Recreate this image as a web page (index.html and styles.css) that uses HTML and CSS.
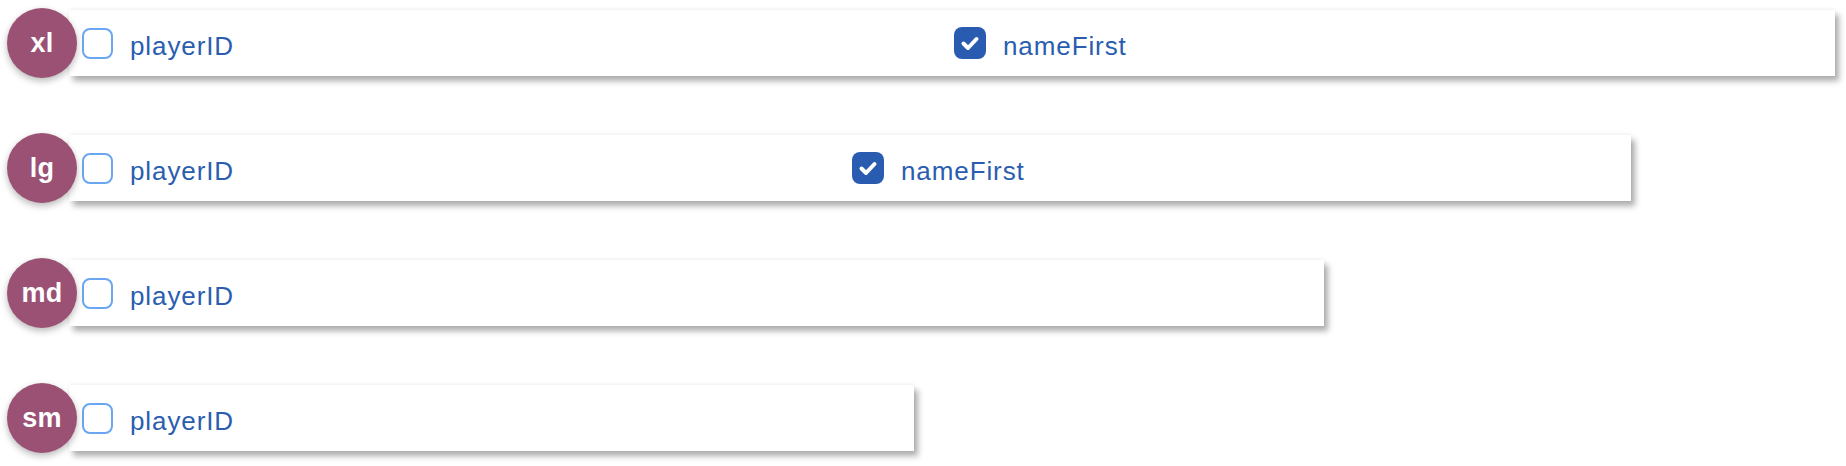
FILE: index.html
```html
<!DOCTYPE html>
<html>
<head>
<meta charset="utf-8">
<link rel="stylesheet" href="styles.css">
</head>
<body>
<div class="page">
  <div class="row">
    <div class="badge">xl</div>
    <div class="bar bar-xl two">
      <label class="item"><span class="box"></span><span class="label">playerID</span></label>
      <label class="item"><span class="box checked"><svg viewBox="0 0 32 32" width="32" height="32"><path d="M9.5 16.5 L14 21 L22.5 12" fill="none" stroke="#fff" stroke-width="4" stroke-linecap="round" stroke-linejoin="round"/></svg></span><span class="label">nameFirst</span></label>
    </div>
  </div>
  <div class="row">
    <div class="badge">lg</div>
    <div class="bar bar-lg two">
      <label class="item"><span class="box"></span><span class="label">playerID</span></label>
      <label class="item"><span class="box checked"><svg viewBox="0 0 32 32" width="32" height="32"><path d="M9.5 16.5 L14 21 L22.5 12" fill="none" stroke="#fff" stroke-width="4" stroke-linecap="round" stroke-linejoin="round"/></svg></span><span class="label">nameFirst</span></label>
    </div>
  </div>
  <div class="row">
    <div class="badge">md</div>
    <div class="bar bar-md">
      <label class="item"><span class="box"></span><span class="label">playerID</span></label>
    </div>
  </div>
  <div class="row">
    <div class="badge">sm</div>
    <div class="bar bar-sm">
      <label class="item"><span class="box"></span><span class="label">playerID</span></label>
    </div>
  </div>
</div>
</body>
</html>
```

FILE: styles.css
```css
html, body {
  margin: 0;
  padding: 0;
  background: #ffffff;
}
.page {
  display: flex;
  flex-direction: column;
  gap: 59px;
  padding-top: 10px;
  padding-bottom: 15px;
  font-family: "Liberation Sans", Arial, Helvetica, sans-serif;
}
.row {
  position: relative;
  padding-left: 69px;
  display: flex;
  align-items: center;
}
.badge {
  position: absolute;
  left: 7px;
  top: 50%;
  margin-top: -35px;
  width: 70px;
  height: 70px;
  border-radius: 50%;
  background: #9b5173;
  color: #ffffff;
  font-weight: bold;
  font-size: 27px;
  display: flex;
  align-items: center;
  justify-content: center;
  box-shadow: 0 3px 7px rgba(0, 0, 0, 0.28);
  z-index: 2;
  letter-spacing: 0.3px;
}
.bar {
  height: 66px;
  background: #ffffff;
  box-sizing: border-box;
  padding: 0 13px;
  display: grid;
  grid-template-columns: 1fr;
  column-gap: 4px;
  align-items: center;
  box-shadow: 4px 5px 6px rgba(0, 0, 0, 0.32), 0 -1px 4px rgba(0, 0, 0, 0.06);
}
.bar.two {
  grid-template-columns: 1fr 1fr;
}
.bar-xl { width: 1766px; }
.bar-lg { width: 1562px; }
.bar-md { width: 1255px; }
.bar-sm { width: 845px; }
.item {
  display: flex;
  align-items: center;
  gap: 17px;
}
.box {
  width: 31px;
  height: 31px;
  box-sizing: border-box;
  border: 2px solid #6aa6f2;
  border-radius: 8px;
  background: #ffffff;
  display: flex;
  align-items: center;
  justify-content: center;
  flex: none;
}
.box.checked {
  width: 32px;
  height: 32px;
  border: none;
  background: #295cb0;
}
.label {
  color: #2a5db0;
  font-size: 26px;
  letter-spacing: 0.9px;
  line-height: 1;
  margin-top: 6px;
}
```
